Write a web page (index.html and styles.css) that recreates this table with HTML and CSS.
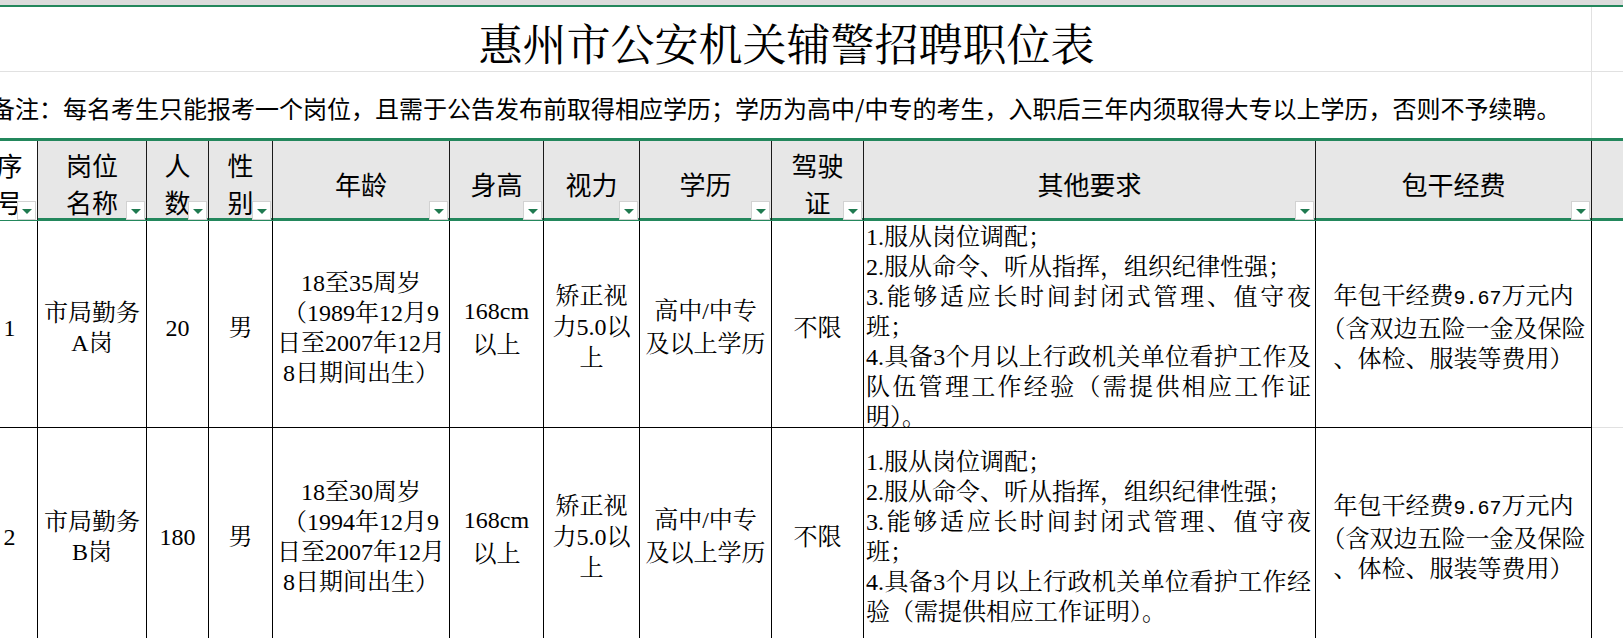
FILE: index.html
```html
<!DOCTYPE html>
<html lang="zh-CN">
<head>
<meta charset="utf-8">
<title>惠州市公安机关辅警招聘职位表</title>
<link rel="stylesheet" href="styles.css">
</head>
<body>
<div class="sheet">
  <div class="topstrip"></div>

  <div class="grid title-row">
    <div class="title-cell">惠州市公安机关辅警招聘职位表</div>
    <div class="blank"></div>
  </div>

  <div class="grid note-row">
    <div class="note-cell">备注：每名考生只能报考一个岗位，且需于公告发布前取得相应学历；学历为高中/中专的考生，入职后三年内须取得大专以上学历，否则不予续聘。</div>
    <div class="blank"></div>
  </div>

  <div class="grid head-row">
    <div class="hcell first"><div class="c">序<br>号</div><span class="dd"></span></div>
    <div class="hcell"><div class="c">岗位<br>名称</div><span class="dd"></span></div>
    <div class="hcell"><div class="c">人<br>数</div><span class="dd"></span></div>
    <div class="hcell"><div class="c">性<br>别</div><span class="dd"></span></div>
    <div class="hcell"><div class="c">年龄</div><span class="dd"></span></div>
    <div class="hcell"><div class="c">身高</div><span class="dd"></span></div>
    <div class="hcell"><div class="c">视力</div><span class="dd"></span></div>
    <div class="hcell"><div class="c">学历</div><span class="dd"></span></div>
    <div class="hcell"><div class="c">驾驶<br>证</div><span class="dd"></span></div>
    <div class="hcell"><div class="c">其他要求</div><span class="dd"></span></div>
    <div class="hcell"><div class="c">包干经费</div><span class="dd"></span></div>
    <div class="hcell last"></div>
  </div>

  <div class="grid data-row row1">
    <div class="cell"><div class="c">1</div></div>
    <div class="cell"><div class="c">市局勤务<br>A岗</div></div>
    <div class="cell"><div class="c">20</div></div>
    <div class="cell"><div class="c">男</div></div>
    <div class="cell"><div class="c">18至35周岁<br>（1989年12月9<br>日至2007年12月<br>8日期间出生）</div></div>
    <div class="cell lh34"><div class="c">168cm<br>以上</div></div>
    <div class="cell lh31"><div class="c">矫正视<br>力5.0以<br>上</div></div>
    <div class="cell lh33"><div class="c">高中/中专<br>及以上学历</div></div>
    <div class="cell"><div class="c">不限</div></div>
    <div class="cell other top">
      <div class="ln">1.服从岗位调配；</div>
      <div class="ln">2.服从命令、听从指挥，组织纪律性强；</div>
      <div class="ln j">3.能够适应长时间封闭式管理、值守夜</div>
      <div class="ln">班；</div>
      <div class="ln j">4.具备3个月以上行政机关单位看护工作及</div>
      <div class="ln j">队伍管理工作经验（需提供相应工作证</div>
      <div class="ln">明）。</div>
    </div>
    <div class="cell fee"><div class="c">年包干经费<span class="mono">9.67</span>万元内<br>（含双边五险一金及保险<br>、体检、服装等费用）</div></div>
    <div class="cell last"></div>
  </div>

  <div class="grid data-row row2">
    <div class="cell"><div class="c">2</div></div>
    <div class="cell"><div class="c">市局勤务<br>B岗</div></div>
    <div class="cell"><div class="c">180</div></div>
    <div class="cell"><div class="c">男</div></div>
    <div class="cell"><div class="c">18至30周岁<br>（1994年12月9<br>日至2007年12月<br>8日期间出生）</div></div>
    <div class="cell lh34"><div class="c">168cm<br>以上</div></div>
    <div class="cell lh31"><div class="c">矫正视<br>力5.0以<br>上</div></div>
    <div class="cell lh33"><div class="c">高中/中专<br>及以上学历</div></div>
    <div class="cell"><div class="c">不限</div></div>
    <div class="cell other">
      <div class="ln">1.服从岗位调配；</div>
      <div class="ln">2.服从命令、听从指挥，组织纪律性强；</div>
      <div class="ln j">3.能够适应长时间封闭式管理、值守夜</div>
      <div class="ln">班；</div>
      <div class="ln j">4.具备3个月以上行政机关单位看护工作经</div>
      <div class="ln">验（需提供相应工作证明）。</div>
    </div>
    <div class="cell fee"><div class="c">年包干经费<span class="mono">9.67</span>万元内<br>（含双边五险一金及保险<br>、体检、服装等费用）</div></div>
    <div class="cell last"></div>
  </div>
</div>
</body>
</html>
```

FILE: styles.css
```css
html, body {
  margin: 0;
  padding: 0;
  background: #ffffff;
  overflow: hidden;
}

.sheet {
  margin-left: -18px;
  width: 1641px;
  color: #000;
  font-family: "Noto Sans CJK SC", "Noto Sans", sans-serif;
}

.topstrip {
  height: 5px;
  background: #dcdcdc;
  border-bottom: 2px solid #23875c;
}

.grid {
  display: grid;
  grid-template-columns: 56px 109px 62px 64px 177px 94px 96px 132px 92px 452px 276px 31px;
}

/* title */
.title-row {
  height: 65px;
  box-sizing: border-box;
  border-bottom: 1px solid #e1e1e1;
}
.title-cell {
  grid-column: 1 / 12;
  border-right: 1px solid #e1e1e1;
  display: flex;
  align-items: center;
  justify-content: center;
  padding-top: 6px;
  box-sizing: border-box;
  font-family: "Noto Serif CJK SC", "Liberation Serif", "Noto Sans CJK SC", serif;
  font-size: 44px;
  line-height: 1;
}

/* note */
.note-row {
  height: 66px;
}
.note-cell {
  grid-column: 1 / 12;
  border-right: 1px solid #e1e1e1;
  display: flex;
  align-items: center;
  padding: 5px 0 0 9px;
  box-sizing: border-box;
  font-size: 24px;
  line-height: 1;
  white-space: nowrap;
  overflow: hidden;
}

/* header row */
.head-row {
  height: 83px;
  box-sizing: border-box;
  border-top: 3px solid #23875c;
  border-bottom: 3px solid #23875c;
  background: #e7e7e7;
}
.hcell {
  position: relative;
  display: flex;
  align-items: center;
  justify-content: center;
  text-align: center;
  padding-top: 5px;
  box-sizing: border-box;
  border-right: 1px solid #1a1a1a;
  font-size: 26px;
  line-height: 37px;
}
.hcell.first {
  background: #ffffff;
}
.hcell.last {
  border-right: none;
}
.c {
  white-space: nowrap;
}
.dd {
  position: absolute;
  right: 1px;
  bottom: 0;
  width: 19px;
  height: 19px;
  box-sizing: border-box;
  background: #ffffff;
  border: 1px solid #d2d2d2;
}
.dd::after {
  content: "";
  position: absolute;
  left: 4px;
  top: 7px;
  border-left: 5px solid transparent;
  border-right: 5px solid transparent;
  border-top: 5px solid #1f7a50;
}

/* data rows */
.data-row {
  font-family: "Liberation Serif", "Noto Serif CJK SC", "Noto Sans CJK SC", serif;
  font-size: 24px;
  line-height: 30px;
}
.row1 {
  height: 207px;
}
.row2 {
  height: 212px;
}
.cell {
  display: flex;
  flex-direction: column;
  align-items: center;
  justify-content: center;
  text-align: center;
  padding-top: 7px;
  box-sizing: border-box;
  border-right: 1px solid #000;
  border-bottom: 1px solid #000;
  overflow: hidden;
}
.cell.last {
  border-right: none;
  border-bottom: 1px solid #e1e1e1;
}
.lh34 { line-height: 34px; }
.lh33 { line-height: 33px; }
.lh31 { line-height: 31px; }

.other {
  align-items: stretch;
  text-align: left;
  padding: 7px 4px 0 2px;
}
.other.top {
  justify-content: flex-start;
  padding-top: 1px;
}
.ln {
  display: block;
  white-space: nowrap;
}
.ln.j {
  text-align: justify;
  text-align-last: justify;
}

.fee {
  line-height: 30px;
}
.mono {
  font-family: "Liberation Mono", monospace;
  font-size: 20px;
}
```
